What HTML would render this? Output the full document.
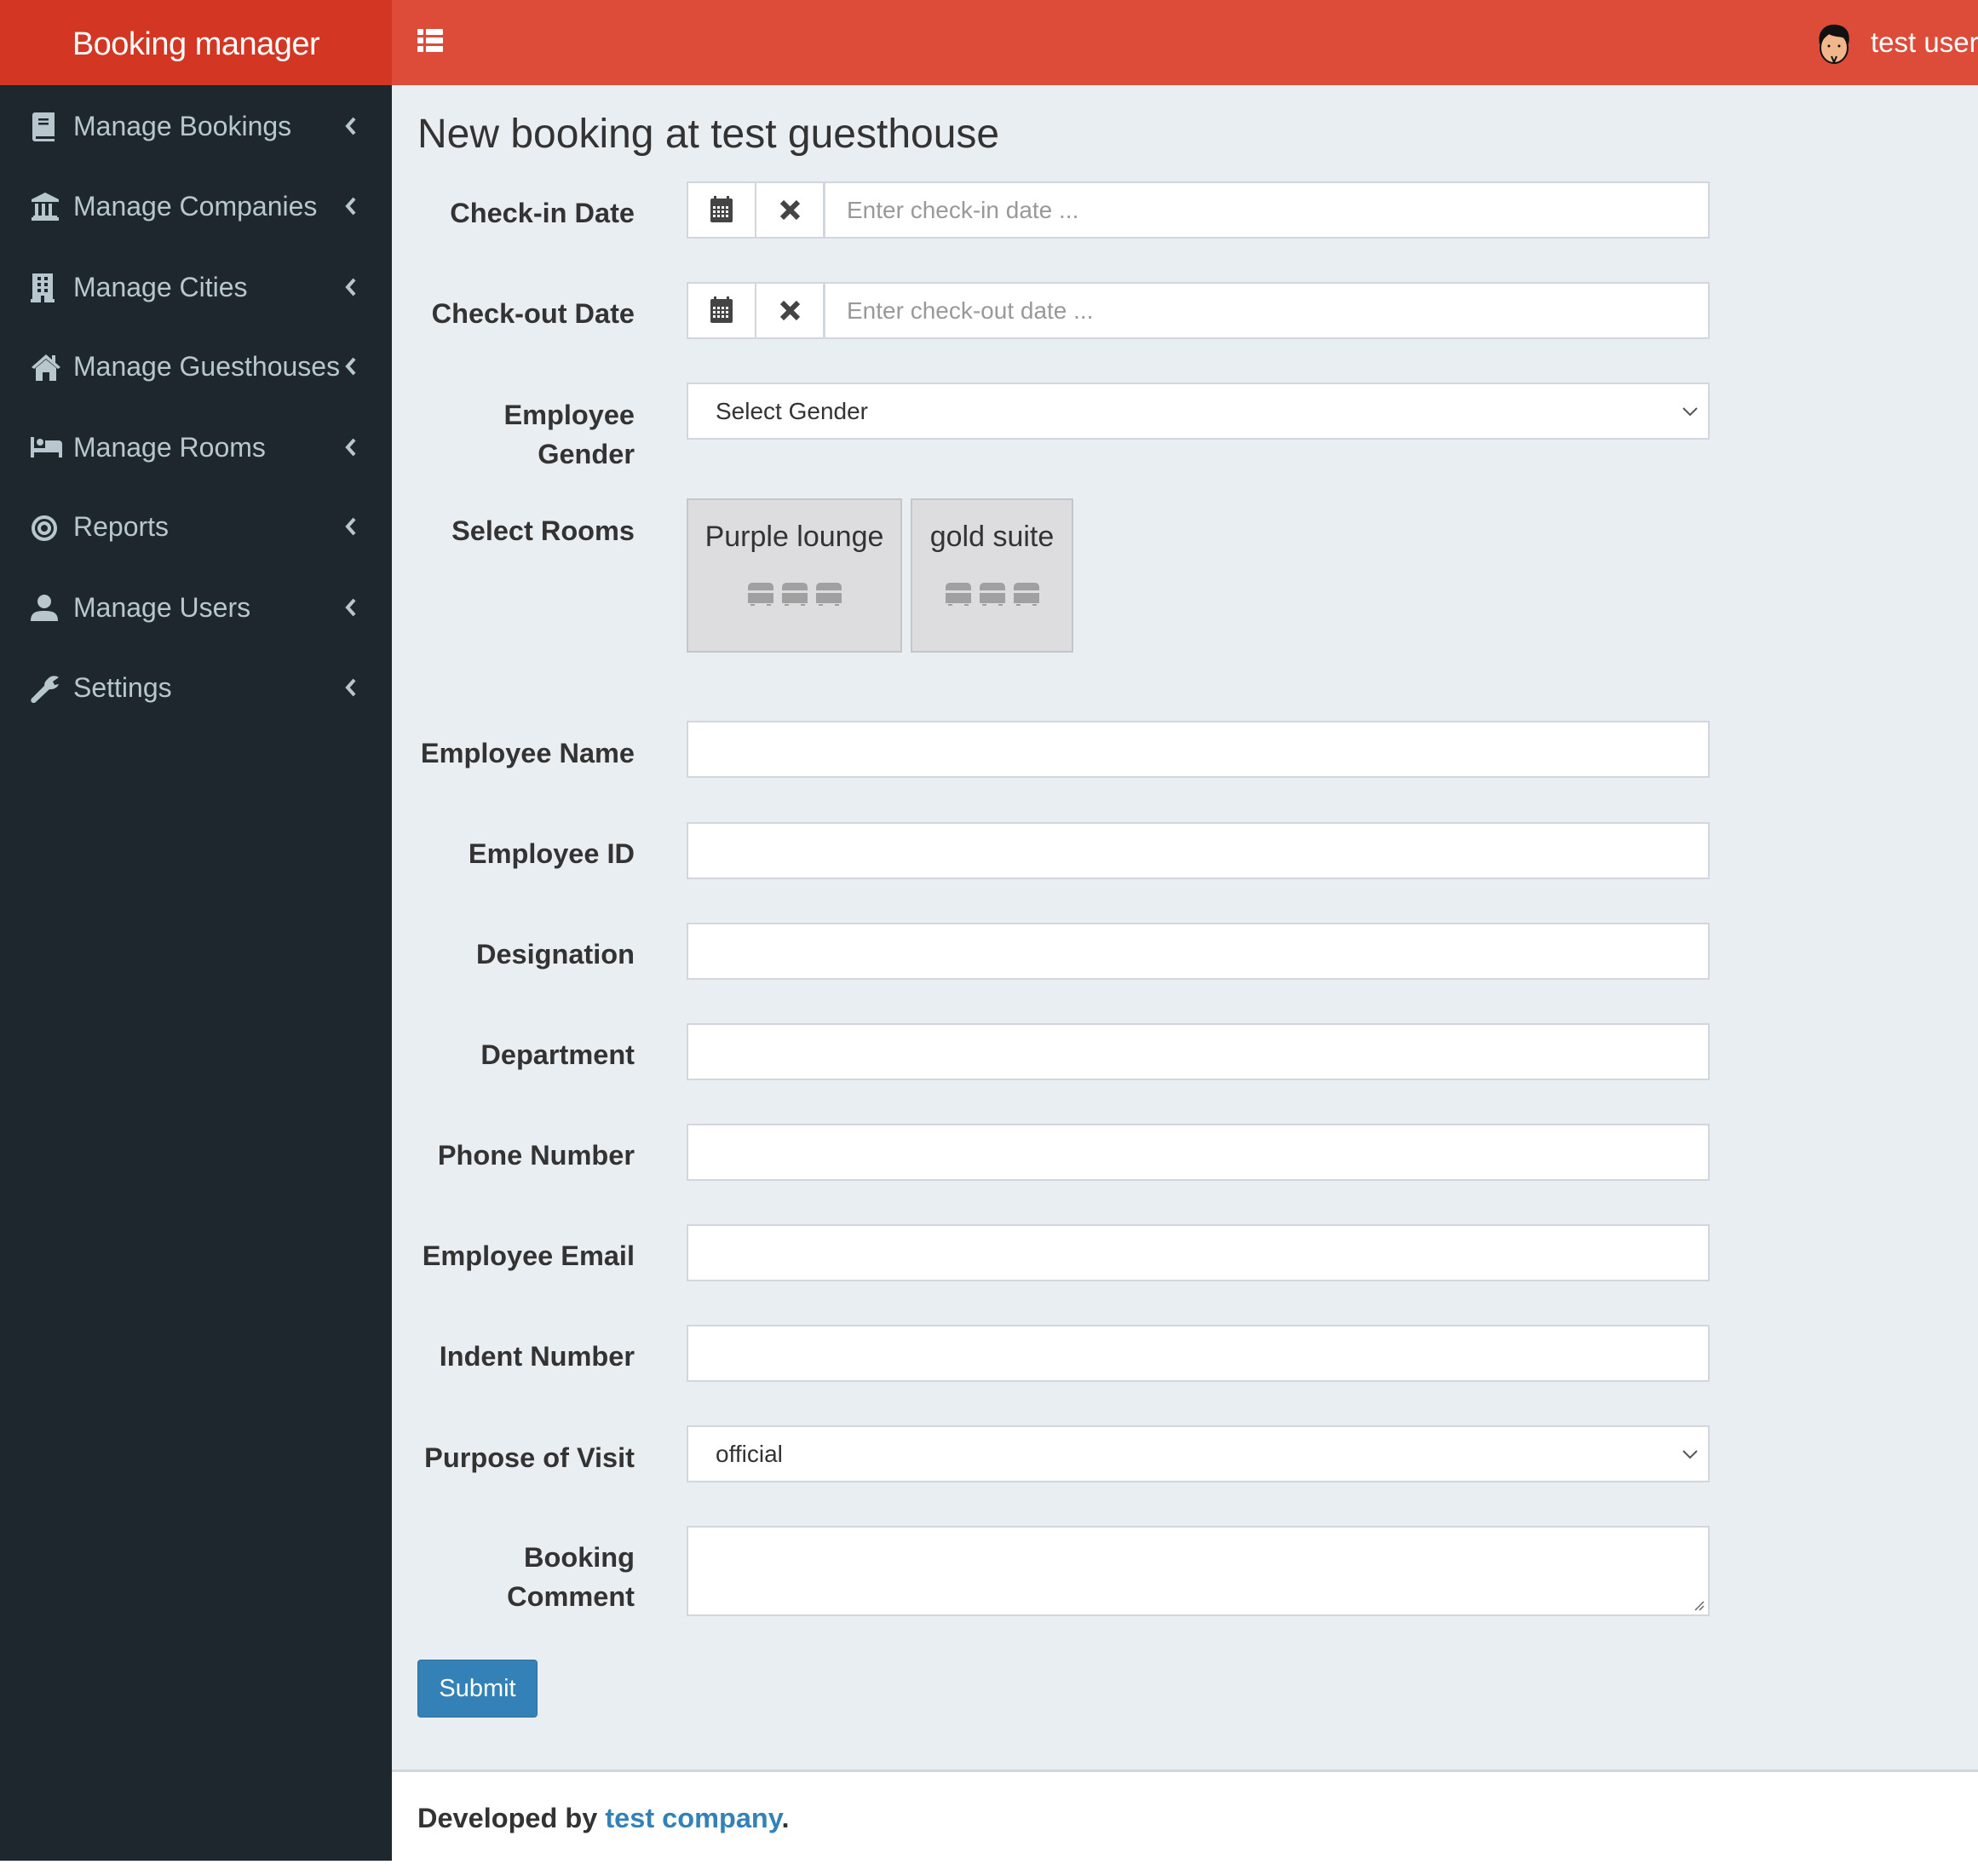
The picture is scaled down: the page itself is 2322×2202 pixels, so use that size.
<!DOCTYPE html>
<html><head><meta charset="utf-8"><style>
*{box-sizing:border-box;margin:0;padding:0}
body{width:2322px;height:2202px;position:relative;background:#fff;font-family:"Liberation Sans",Arial,sans-serif;overflow:hidden}
.abs{position:absolute}
#brand{left:0;top:0;width:460px;height:100px;background:#d33724;color:#fff;font-size:38px;font-weight:300;text-align:center;line-height:104px;letter-spacing:-0.5px}
#top{left:460px;top:0;right:0;height:100px;background:#dd4b39}
#side{left:0;top:100px;width:460px;height:2084px;background:#1f272e}
#main{left:460px;top:100px;right:0;height:1977px;background:#e9eef2}
#foot{left:460px;top:2077px;right:0;height:125px;background:#fff;border-top:3px solid #d2d6de}
.nav{position:absolute;left:0;width:460px;height:60px;color:#b8c7ce;font-size:32px;line-height:60px}
.nav span{position:absolute;left:86px}
.nav svg{position:absolute;left:36px;top:14px}
.nav .ch{position:absolute;left:405px;top:18px}
.lbl{position:absolute;right:1577px;text-align:right;font-weight:bold;font-size:32.5px;color:#333;line-height:46px}
.inp{position:absolute;left:806px;width:1201px;height:67px;background:#fff;border:2px solid #d2d6de}
.ph{position:absolute;font-size:28px;color:#999;top:0;line-height:63px}
.room{position:absolute;top:585px;height:181px;background:#dddde0;border:2px solid #c5c6c8;text-align:center;font-size:34px;color:#333}
</style></head><body>
<div class="abs" id="brand">Booking manager</div>
<div class="abs" id="top">
 <svg class="abs" style="left:30px;top:34px" width="30" height="28" viewBox="0 0 30 28" fill="#fff"><rect x="0" y="0" width="7" height="7" rx="1"/><rect x="10" y="0" width="20" height="7" rx="1"/><rect x="0" y="10" width="7" height="7" rx="1"/><rect x="10" y="10" width="20" height="7" rx="1"/><rect x="0" y="20" width="7" height="7" rx="1"/><rect x="10" y="20" width="20" height="7" rx="1"/></svg>
 <svg class="abs" style="left:1673px;top:26px" width="40" height="50" viewBox="0 0 40 50"><ellipse cx="20" cy="30" rx="16" ry="18" fill="#f1b68a" stroke="#111" stroke-width="2"/><path d="M3 26 C0 10 10 2 22 3 C34 4 40 12 37 26 L34 20 C28 16 20 18 14 14 C10 18 6 20 3 26Z" fill="#111"/><path d="M17 40 L20 47 L23 40" stroke="#111" stroke-width="2" fill="none"/><circle cx="14" cy="28" r="1.5" fill="#111"/><circle cx="26" cy="28" r="1.5" fill="#111"/></svg>
 <div class="abs" style="left:1736px;top:31px;color:#fff;font-size:33px;white-space:nowrap">test user</div>
</div>
<div class="abs" id="side">
 <div class="nav" style="top:18px"><svg width="30" height="34" viewBox="0 0 30 34" fill="#b8c7ce"><path d="M2 3a3 3 0 0 1 3-3h23v28H6v3h22v3H5a3 3 0 0 1-3-3z"/><rect x="9" y="7" width="12" height="2.5" fill="#1f272e"/><rect x="9" y="12" width="12" height="2.5" fill="#1f272e"/></svg><span>Manage Bookings</span><svg class="ch" width="14" height="24" viewBox="0 0 14 24"><path d="M11 3 L3 12 L11 21" stroke="#b8c7ce" stroke-width="4" fill="none"/></svg></div>
 <div class="nav" style="top:112px"><svg width="34" height="34" viewBox="0 0 34 34" fill="#b8c7ce"><path d="M17 0 L33 8 V11 H1 V8Z"/><rect x="5" y="13" width="4" height="14"/><rect x="13" y="13" width="4" height="14"/><rect x="21" y="13" width="4" height="14"/><rect x="1" y="29" width="32" height="4"/><rect x="3" y="27" width="28" height="2"/></svg><span>Manage Companies</span><svg class="ch" width="14" height="24" viewBox="0 0 14 24"><path d="M11 3 L3 12 L11 21" stroke="#b8c7ce" stroke-width="4" fill="none"/></svg></div>
 <div class="nav" style="top:207px"><svg width="30" height="34" viewBox="0 0 30 34" fill="#b8c7ce"><path d="M2 0H26V30H28V34H0V30H2Z"/><g fill="#1f272e"><rect x="8" y="4" width="4" height="4"/><rect x="16" y="4" width="4" height="4"/><rect x="8" y="11" width="4" height="4"/><rect x="16" y="11" width="4" height="4"/><rect x="8" y="18" width="4" height="4"/><rect x="16" y="18" width="4" height="4"/><rect x="12" y="26" width="4" height="8"/></g></svg><span>Manage Cities</span><svg class="ch" width="14" height="24" viewBox="0 0 14 24"><path d="M11 3 L3 12 L11 21" stroke="#b8c7ce" stroke-width="4" fill="none"/></svg></div>
 <div class="nav" style="top:300px"><svg width="36" height="34" viewBox="0 0 36 34" fill="#b8c7ce"><path d="M18 2 L35 17 L32 19 L18 7 L4 19 L1 17Z"/><path d="M6 18 L18 8 L30 18 V33 H22 V23 H14 V33 H6Z"/><rect x="25" y="3" width="4" height="9"/></svg><span>Manage Guesthouses</span><svg class="ch" width="14" height="24" viewBox="0 0 14 24"><path d="M11 3 L3 12 L11 21" stroke="#b8c7ce" stroke-width="4" fill="none"/></svg></div>
 <div class="nav" style="top:395px"><svg width="38" height="34" viewBox="0 0 38 34" fill="#b8c7ce"><rect x="0" y="4" width="4" height="24"/><circle cx="11" cy="10" r="4"/><path d="M17 8 H33 A4 4 0 0 1 37 12 V28 H33 V22 H4 V17 H17Z"/></svg><span>Manage Rooms</span><svg class="ch" width="14" height="24" viewBox="0 0 14 24"><path d="M11 3 L3 12 L11 21" stroke="#b8c7ce" stroke-width="4" fill="none"/></svg></div>
 <div class="nav" style="top:488px"><svg width="34" height="34" viewBox="0 0 34 34"><circle cx="16" cy="18" r="13" stroke="#b8c7ce" stroke-width="4" fill="none"/><circle cx="16" cy="18" r="6" stroke="#b8c7ce" stroke-width="4" fill="none"/></svg><span>Reports</span><svg class="ch" width="14" height="24" viewBox="0 0 14 24"><path d="M11 3 L3 12 L11 21" stroke="#b8c7ce" stroke-width="4" fill="none"/></svg></div>
 <div class="nav" style="top:583px"><svg width="34" height="34" viewBox="0 0 34 34" fill="#b8c7ce"><circle cx="16" cy="9" r="8"/><path d="M0 32 C0 22 6 20 16 20 C26 20 32 22 32 32Z"/></svg><span>Manage Users</span><svg class="ch" width="14" height="24" viewBox="0 0 14 24"><path d="M11 3 L3 12 L11 21" stroke="#b8c7ce" stroke-width="4" fill="none"/></svg></div>
 <div class="nav" style="top:677px"><svg width="34" height="34" viewBox="0 0 34 34" fill="#b8c7ce"><path d="M20 6 A10 10 0 0 1 33 4 L26 9 L28 13 L33 12 A10 10 0 0 1 22 18 L6 33 A3 3 0 0 1 1 29 L16 14 A10 10 0 0 1 20 6Z"/></svg><span>Settings</span><svg class="ch" width="14" height="24" viewBox="0 0 14 24"><path d="M11 3 L3 12 L11 21" stroke="#b8c7ce" stroke-width="4" fill="none"/></svg></div>
</div>
<div class="abs" id="main"></div>
<div class="abs" style="left:490px;top:130px;font-size:48px;color:#333">New booking at test guesthouse</div>

<div class="lbl" style="top:227px">Check-in Date</div>
<div class="inp" style="top:213px">
 <div class="abs" style="left:0;top:0;width:80px;height:63px;border-right:2px solid #d2d6de"><svg class="abs" style="left:24px;top:15px" width="30" height="32" viewBox="0 0 30 32" fill="#444"><rect x="2" y="3" width="26" height="28" rx="2"/><rect x="6" y="0" width="3" height="6"/><rect x="21" y="0" width="3" height="6"/><g fill="#fff"><rect x="5" y="12" width="3" height="3"/><rect x="10" y="12" width="3" height="3"/><rect x="15" y="12" width="3" height="3"/><rect x="20" y="12" width="3" height="3"/><rect x="5" y="17" width="3" height="3"/><rect x="10" y="17" width="3" height="3"/><rect x="15" y="17" width="3" height="3"/><rect x="20" y="17" width="3" height="3"/><rect x="5" y="22" width="3" height="3"/><rect x="10" y="22" width="3" height="3"/><rect x="15" y="22" width="3" height="3"/><rect x="20" y="22" width="3" height="3"/></g></svg></div>
 <div class="abs" style="left:80px;top:0;width:81px;height:63px;border-right:3px solid #d2d6de"><svg class="abs" style="left:27px;top:19px" width="25" height="25" viewBox="0 0 25 25"><path d="M3 3 L22 22 M22 3 L3 22" stroke="#444" stroke-width="6"/></svg></div>
 <div class="ph" style="left:186px">Enter check-in date ...</div>
</div>
<div class="lbl" style="top:345px">Check-out Date</div>
<div class="inp" style="top:331px">
 <div class="abs" style="left:0;top:0;width:80px;height:63px;border-right:2px solid #d2d6de"><svg class="abs" style="left:24px;top:15px" width="30" height="32" viewBox="0 0 30 32" fill="#444"><rect x="2" y="3" width="26" height="28" rx="2"/><rect x="6" y="0" width="3" height="6"/><rect x="21" y="0" width="3" height="6"/><g fill="#fff"><rect x="5" y="12" width="3" height="3"/><rect x="10" y="12" width="3" height="3"/><rect x="15" y="12" width="3" height="3"/><rect x="20" y="12" width="3" height="3"/><rect x="5" y="17" width="3" height="3"/><rect x="10" y="17" width="3" height="3"/><rect x="15" y="17" width="3" height="3"/><rect x="20" y="17" width="3" height="3"/><rect x="5" y="22" width="3" height="3"/><rect x="10" y="22" width="3" height="3"/><rect x="15" y="22" width="3" height="3"/><rect x="20" y="22" width="3" height="3"/></g></svg></div>
 <div class="abs" style="left:80px;top:0;width:81px;height:63px;border-right:3px solid #d2d6de"><svg class="abs" style="left:27px;top:19px" width="25" height="25" viewBox="0 0 25 25"><path d="M3 3 L22 22 M22 3 L3 22" stroke="#444" stroke-width="6"/></svg></div>
 <div class="ph" style="left:186px">Enter check-out date ...</div>
</div>
<div class="lbl" style="top:464px">Employee<br>Gender</div>
<div class="inp" style="top:449px"><div class="ph" style="left:32px;color:#333">Select Gender</div><svg class="abs" style="right:12px;top:26px" width="18" height="12" viewBox="0 0 18 12"><path d="M1 2 L9 10 L17 2" stroke="#555" stroke-width="2" fill="none"/></svg></div>
<div class="lbl" style="top:600px">Select Rooms</div>
<div class="room" style="left:806px;width:253px"><div style="margin-top:24px">Purple lounge</div><svg style="margin-top:34px" width="110" height="28" viewBox="0 0 110 28" fill="#a0a0a0"><g id="b"><path d="M0 5a5 5 0 0 1 5-5h20a5 5 0 0 1 5 5v4H0z"/><rect x="0" y="12" width="30" height="12"/><rect x="3" y="25" width="5" height="2"/><rect x="22" y="25" width="5" height="2"/></g><use href="#b" x="40"/><use href="#b" x="80"/></svg></div>
<div class="room" style="left:1069px;width:191px"><div style="margin-top:24px">gold suite</div><svg style="margin-top:34px" width="110" height="28" viewBox="0 0 110 28" fill="#a0a0a0"><use href="#b" x="0"/><use href="#b" x="40"/><use href="#b" x="80"/></svg></div>

<div class="lbl" style="top:861px">Employee Name</div><div class="inp" style="top:846px"></div>
<div class="lbl" style="top:979px">Employee ID</div><div class="inp" style="top:965px"></div>
<div class="lbl" style="top:1097px">Designation</div><div class="inp" style="top:1083px"></div>
<div class="lbl" style="top:1215px">Department</div><div class="inp" style="top:1201px"></div>
<div class="lbl" style="top:1333px">Phone Number</div><div class="inp" style="top:1319px"></div>
<div class="lbl" style="top:1451px">Employee Email</div><div class="inp" style="top:1437px"></div>
<div class="lbl" style="top:1569px">Indent Number</div><div class="inp" style="top:1555px"></div>
<div class="lbl" style="top:1688px">Purpose of Visit</div>
<div class="inp" style="top:1673px"><div class="ph" style="left:32px;color:#333">official</div><svg class="abs" style="right:12px;top:26px" width="18" height="12" viewBox="0 0 18 12"><path d="M1 2 L9 10 L17 2" stroke="#555" stroke-width="2" fill="none"/></svg></div>
<div class="lbl" style="top:1805px">Booking<br>Comment</div>
<div class="inp" style="top:1791px;height:106px"><svg class="abs" style="right:4px;bottom:4px" width="14" height="14" viewBox="0 0 14 14"><path d="M13 3 L3 13 M13 8 L8 13" stroke="#666" stroke-width="1.5"/></svg></div>
<div class="abs" style="left:490px;top:1948px;width:141px;height:68px;background:#3381b7;border:1px solid #2e6fa0;border-radius:4px;color:#fff;font-size:29px;text-align:center;line-height:66px">Submit</div>
<div class="abs" id="foot"><div class="abs" style="left:30px;top:36px;font-size:32.5px;font-weight:bold;color:#333">Developed by <span style="color:#3381b7">test company</span>.</div></div>
</body></html>
